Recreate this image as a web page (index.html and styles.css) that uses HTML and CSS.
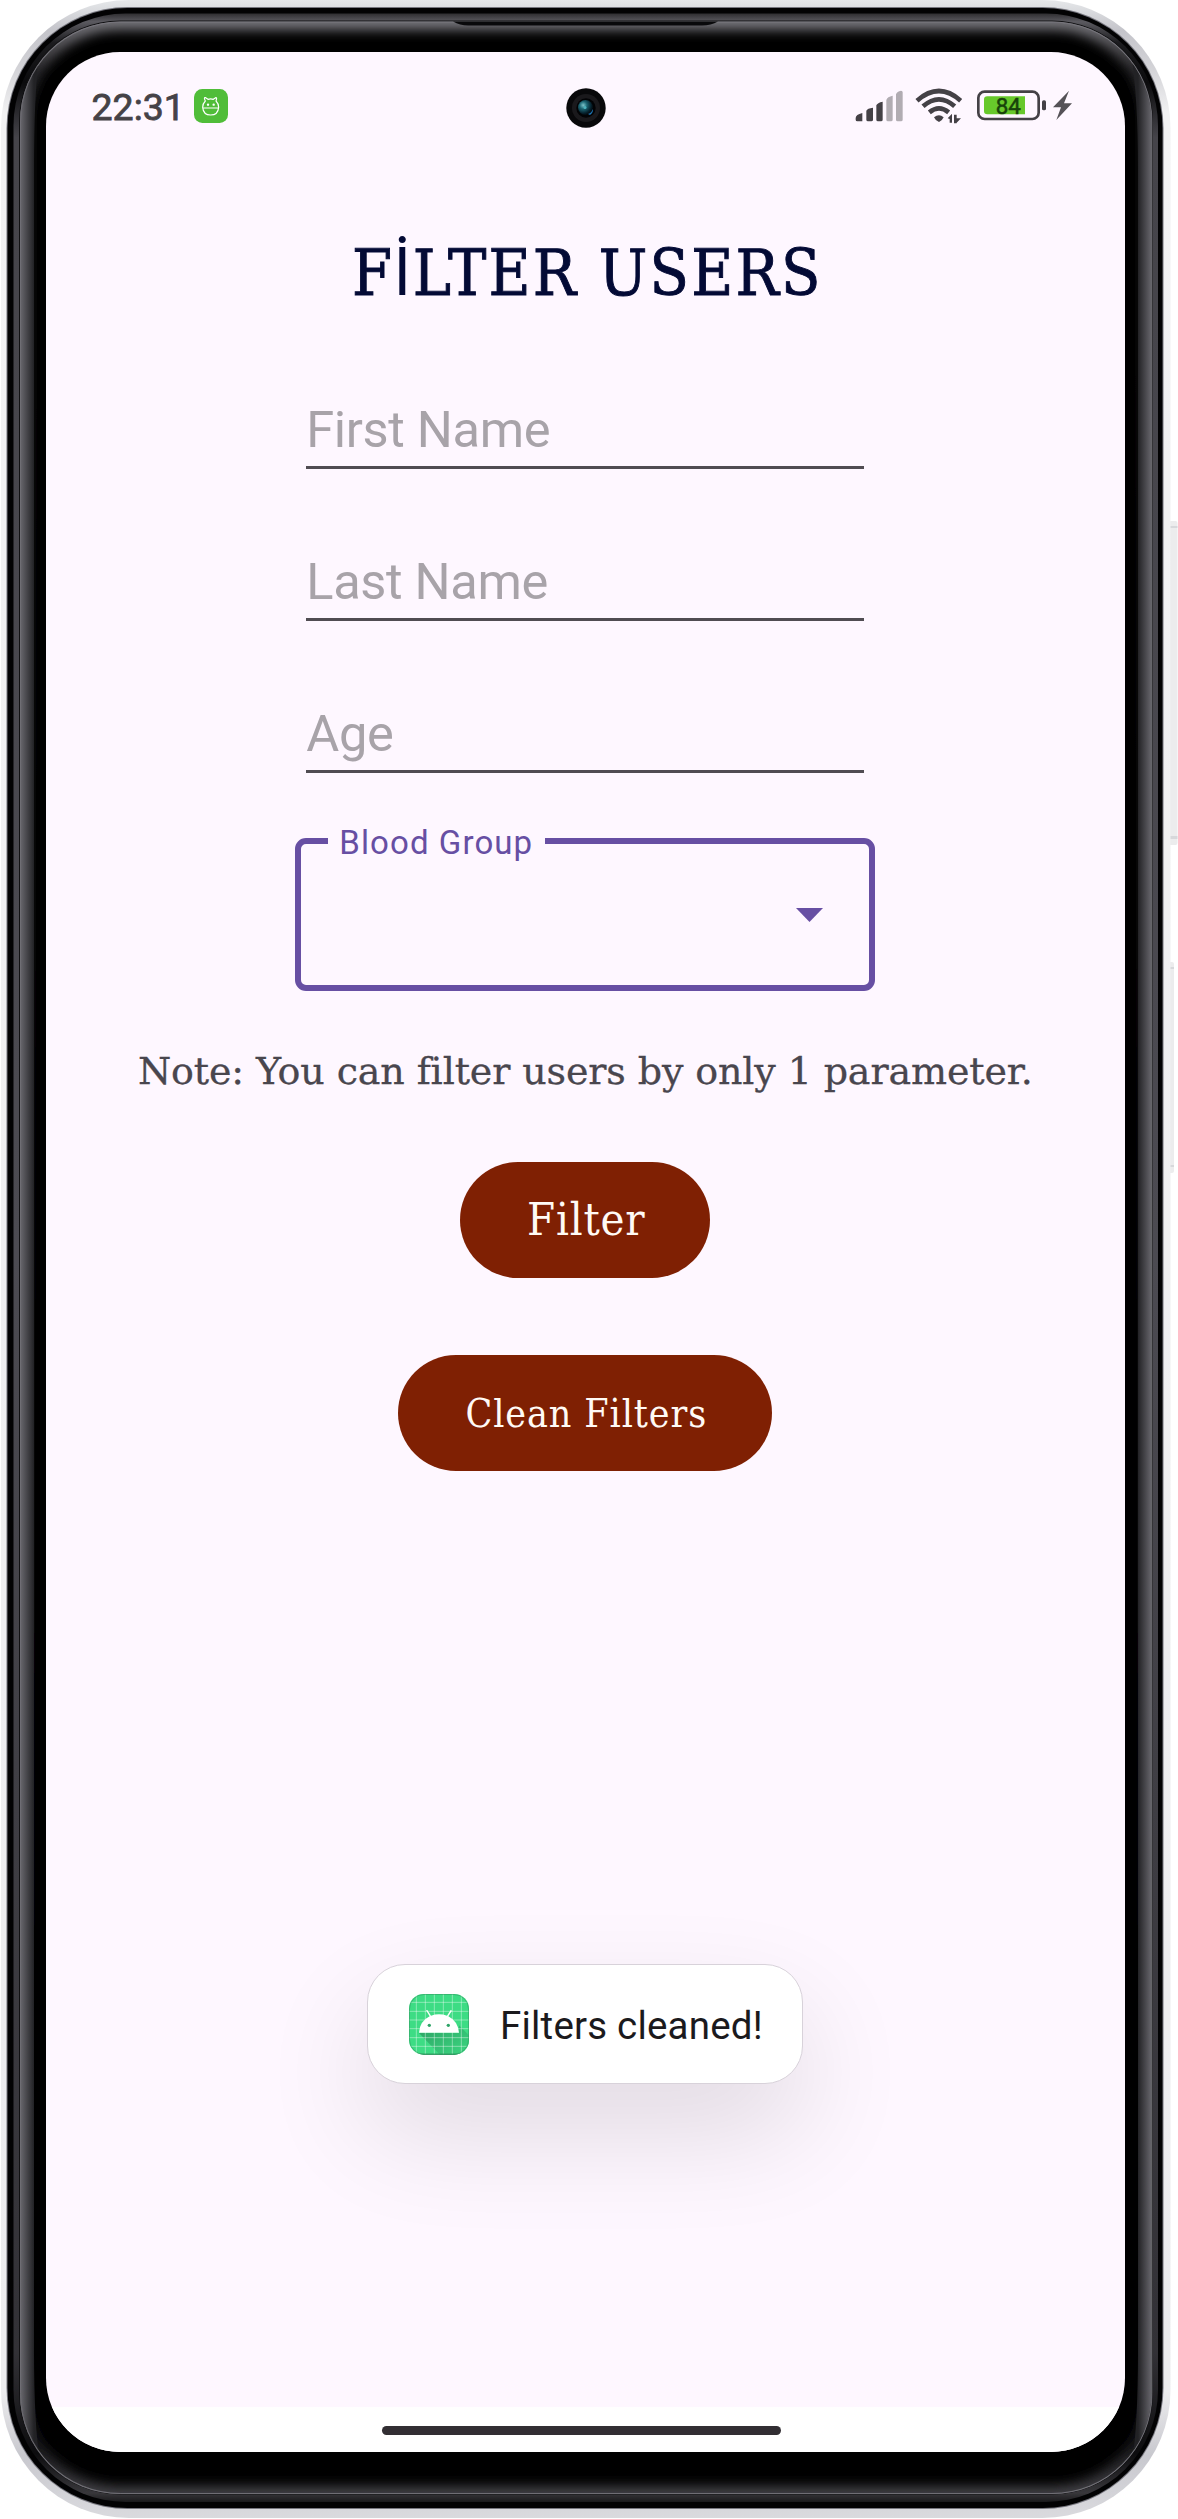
FILE: index.html
```html
<!DOCTYPE html>
<html lang="en">
<head>
<meta charset="utf-8">
<title>Filter Users</title>
<link rel="stylesheet" href="styles.css">
</head>
<body>
<div class="phone">
  <svg class="frame" width="1178" height="2519" viewBox="0 0 1178 2519" aria-hidden="true">
    <defs>
      <linearGradient id="metal" x1="0" y1="0" x2="0" y2="1">
        <stop offset="0" stop-color="#e6e8ea"/><stop offset=".012" stop-color="#c4c4ca"/><stop offset=".028" stop-color="#d4d4d8"/><stop offset=".045" stop-color="#f2f2f3"/>
        <stop offset=".95" stop-color="#ececee"/><stop offset=".975" stop-color="#c8c8ce"/><stop offset="1" stop-color="#dadade"/>
      </linearGradient>
      <linearGradient id="ring" x1="0" y1="13" x2="0" y2="2503" gradientUnits="userSpaceOnUse">
        <stop offset="0" stop-color="#2c2b2e"/><stop offset=".0035" stop-color="#5b5a60"/><stop offset=".012" stop-color="#1b1b1e"/><stop offset=".028" stop-color="#0b0b0d"/><stop offset=".05" stop-color="#45444a"/>
        <stop offset=".5" stop-color="#4c4b52"/><stop offset=".94" stop-color="#323136"/><stop offset=".98" stop-color="#0c0c0e"/><stop offset=".996" stop-color="#38373b"/><stop offset="1" stop-color="#161618"/>
      </linearGradient>
      <linearGradient id="leftGloss" x1="20" x2="34" y1="0" y2="0" gradientUnits="userSpaceOnUse"><stop offset="0" stop-color="#6a696f"/><stop offset="1" stop-color="#222225"/></linearGradient>
      <linearGradient id="rightGloss" x1="1138" x2="1152" y1="0" y2="0" gradientUnits="userSpaceOnUse"><stop offset="0" stop-color="#222225"/><stop offset="1" stop-color="#6a696f"/></linearGradient>
      <linearGradient id="edgeGloss" x1="0" x2="0" y1="20" y2="2495" gradientUnits="userSpaceOnUse">
        <stop offset="0" stop-color="#7c7b81"/><stop offset=".02" stop-color="#2c2b2e"/><stop offset=".98" stop-color="#19191b"/><stop offset="1" stop-color="#454449"/>
      </linearGradient>
      <filter id="soften" x="0" y="0" width="1178" height="2519" filterUnits="userSpaceOnUse"><feGaussianBlur stdDeviation="6"/></filter>
      <clipPath id="glass"><rect x="20.5" y="22" width="1131" height="2471.5" rx="100"/></clipPath>
      <radialGradient id="lens" cx=".35" cy=".35" r=".7"><stop offset="0" stop-color="#7cc4cb"/><stop offset=".35" stop-color="#1c6674"/><stop offset=".75" stop-color="#06222e"/><stop offset="1" stop-color="#020508"/></radialGradient>
    </defs>
    <g fill="#ececed">
      <rect x="1166" y="521" width="11.5" height="324" rx="2"/><rect x="1166" y="962" width="8" height="211" rx="2"/>
    </g>
    <g fill="#d7d8db"><path d="M1170 526h7.5v2h-7.5zM1170 836h7.5v3h-7.5zM1170 967h4v2h-4zM1170 1165h4v2h-4z"/></g>
    <rect x="1" y="0" width="1169.5" height="2518" rx="128" fill="url(#metal)"/>
    <rect x="6.5" y="7" width="1157" height="2502" rx="121" fill="#77777f"/>
    <rect x="7.5" y="8" width="1155" height="2500" rx="120" fill="#020203"/>
    <rect x="13.5" y="13.5" width="1144.5" height="2488.5" rx="112" fill="url(#ring)"/>
    <rect x="19" y="20.5" width="1134" height="2474" rx="101" fill="#111113"/>
    <rect x="20" y="21.5" width="1132" height="2472.5" rx="100" fill="#77767c"/>
    <rect x="21" y="22.5" width="1130" height="2470.5" rx="99.5" fill="#000"/>
    <g clip-path="url(#glass)">
      <rect x="20" y="21" width="1132" height="2474" rx="100" fill="none" stroke="url(#edgeGloss)" stroke-width="18" filter="url(#soften)"/>
      <path d="M20 80L39 54Q34 95 34 170V2350Q34 2425 40 2463L20 2440z" fill="url(#leftGloss)"/>
      <path d="M1152 80L1131 54Q1138 95 1138 170V2350Q1138 2425 1132 2463L1152 2440z" fill="url(#rightGloss)"/>
    </g>
    <rect x="20.5" y="22" width="1131.5" height="2471.5" rx="100" fill="none" stroke="#77767c" stroke-width=".7"/>
    <path d="M453 21.5H718Q711 25.5 702 25.5H468Q460 25.5 453 21.5z" fill="#09090b"/>
  </svg>

  <main class="screen">
    <header class="status">
      <span class="time">22:31</span>
      <svg class="app-badge" width="34" height="34" viewBox="0 0 102 102" aria-hidden="true">
        <rect width="102" height="102" rx="25" fill="#50bd39"/>
        <g fill="none" stroke="#fff" stroke-width="3.5" stroke-linecap="round" stroke-linejoin="round">
          <path d="M34 36Q28 24 35 26L42 31Q50 28 58 31L65 26Q70 25 66 36Q74 44 74 55Q72 78 50 78Q28 78 26 55Q26 44 34 36zM27 57H73"/>
        </g>
        <circle cx="42" cy="47" r="3.5" fill="#fff"/><circle cx="59" cy="47" r="3.5" fill="#fff"/>
      </svg>
      <svg class="system-icons" width="222" height="40" viewBox="69 80 666 120" aria-hidden="true">
        <g fill="#444146">
          <path d="M77 176Q77 166 97 161V186H82Q77 186 77 181zM109 154Q112 147 129 145V181Q129 186 124 186H114Q109 186 109 181zM139 138Q142 130 158 127V181Q158 186 153 186H144Q139 186 139 181z"/>
          <path fill="#b1acb2" d="M169 122Q172 112 188 109V181Q188 186 183 186H174Q169 186 169 181zM198 105Q201 96 213 94Q218 94 218 99V181Q218 186 213 186H203Q198 186 198 181z"/>
          <path d="M312 174Q327 162 341 174Q337 184 327 188Q316 184 312 174z"/>
        </g>
        <g fill="none" stroke="#444146" stroke-width="14">
          <path d="M261 124Q327 66 392 124M279 141Q327 99 374 141M298 159Q327 135 356 159"/>
        </g>
        <path d="M353 177L366 163V190H359V179zM372 192V166H380V177H393L380 190V192z" fill="#444146"/>
        <rect x="445" y="97" width="181" height="82" rx="19" fill="none" stroke="#444146" stroke-width="8"/>
        <path d="M472 111H585V165H472Q462 165 462 155V121Q462 111 472 111z" fill="#67c82b"/>
        <rect x="636" y="123" width="12" height="30" rx="5" fill="#444146"/>
        <text class="battery-level" x="535" y="164" text-anchor="middle">84</text>
        <path d="M717 94L669 144H693L679 182L726 132H702z" fill="#555257"/>
      </svg>
    </header>

    <h1 class="title">F<span class="dotted-i">İ</span>LTER USERS</h1>

    <form class="filters">
      <div class="field">First Name</div>
      <div class="field">Last Name</div>
      <div class="field">Age</div>
      <div class="dropdown">
        <span class="dropdown-label">Blood Group</span>
        <svg class="caret" width="27" height="14" viewBox="0 0 27 14" aria-hidden="true"><path d="M0 0H27L13.5 14z" fill="#674fa3"/></svg>
      </div>
    </form>

    <p class="note">Note: You can filter users by only 1 parameter.</p>
    <div class="button button-filter">Filter</div>
    <div class="button button-clean">Clean Filters</div>

    <div class="toast">
      <svg width="60" height="61" viewBox="0 0 180 183" aria-hidden="true">
        <defs>
          <clipPath id="tile"><rect width="180" height="182" rx="44"/></clipPath>
          <linearGradient id="cast" x1="0" y1="0" x2="1" y2="1"><stop offset="0" stop-color="#2ca163"/><stop offset="1" stop-color="#3ddc84"/></linearGradient>
        </defs>
        <g clip-path="url(#tile)">
          <rect width="180" height="183" fill="#3ddc84"/>
          <path d="M30 117H150V94L190 134V190H100z" fill="url(#cast)"/>
          <path d="M22 0V183M49 0V183M76 0V183M103 0V183M130 0V183M157 0V183M0 25H180M0 52H180M0 78H180M0 104H180M0 131H180M0 157H180" stroke="#fff" stroke-opacity=".4" stroke-width="3"/>
          <path d="M0 181H180" stroke="#2e8b58" stroke-width="4"/>
        </g>
        <rect x="1.5" y="1.5" width="177" height="179" rx="43" fill="none" stroke="#319b62" stroke-opacity=".55" stroke-width="3"/>
        <path d="M30 116Q32 82 62 67L51 49L55 48L66 65Q90 57 114 65L125 48L129 50L118 67Q147 82 150 116z" fill="#fff"/>
        <circle cx="61" cy="94" r="5" fill="#2ea467"/><circle cx="118" cy="94" r="5" fill="#2ea467"/>
      </svg>
      <span class="toast-text">Filters cleaned!</span>
    </div>

    <footer class="nav"><span class="nav-pill"></span></footer>
  </main>

  <svg class="camera" width="40" height="40" viewBox="0 0 40 40" aria-hidden="true">
    <circle cx="20" cy="20" r="19.7" fill="#08080a"/><circle cx="20" cy="20" r="14" fill="#1a191c"/><circle cx="20" cy="20" r="9.7" fill="#020305"/>
    <circle cx="19.5" cy="19.5" r="7.5" fill="url(#lens)"/>
    <path d="M22 26Q26 25 26.5 21Q28 24 24 27z" fill="#1d75b5"/><circle cx="19" cy="19.5" r="1.5" fill="#4db2bd"/>
  </svg>
</div>
</body>
</html>
```

FILE: styles.css
```css
* { box-sizing: border-box; }

body {
  margin: 0;
  background: #fff;
  font-family: Roboto, sans-serif;
}

.phone {
  position: relative;
  width: 1178px;
  height: 2519px;
  padding: 52px 53.5px 67.5px 46px;
  overflow: hidden;
}

.frame {
  position: absolute;
  inset: 0;
}

.camera {
  position: absolute;
  left: 565.5px;
  top: 87.5px;
}

.screen {
  position: relative;
  display: flex;
  flex-direction: column;
  align-items: center;
  height: 100%;
  border-radius: 74px;
  background: #fef7ff;
  overflow: hidden;
}

.status {
  display: flex;
  align-items: center;
  align-self: stretch;
  height: 108px;
  padding: 0 50px 0 45.5px;
}

.time {
  width: 102.5px;
  padding-top: 1px;
  font-size: 37.5px;
  line-height: 40px;
  color: #454247;
  -webkit-text-stroke: .8px #454247;
}

.system-icons { margin-left: auto; }

.battery-level {
  font-size: 67px;
  font-weight: 400;
  fill: #17420a;
  stroke: #17420a;
  stroke-width: 1.5px;
}

.title {
  margin: 68.5px 0 0;
  padding-left: 4px;
  font-family: "DejaVu Serif Condensed", "DejaVu Serif", serif;
  font-stretch: condensed;
  font-size: 64px;
  font-weight: 400;
  line-height: 88px;
  letter-spacing: 2.2px;
  color: #030a35;
  -webkit-text-stroke: .9px #030a35;
  white-space: nowrap;
}

.dotted-i {
  font-family: Roboto, sans-serif;
  font-size: 66px;
  line-height: 1px;
  -webkit-text-stroke: 0;
}

.filters {
  display: flex;
  flex-direction: column;
  align-items: center;
}

.field {
  display: flex;
  align-items: flex-end;
  width: 558px;
  height: 152px;
  border-bottom: 3px solid #504c52;
  font-size: 50.6px;
  line-height: 72px;
  letter-spacing: -.35px;
  color: #a8a3a9;
}

.dropdown {
  position: relative;
  display: flex;
  align-items: center;
  justify-content: flex-end;
  width: 580px;
  height: 153px;
  margin-top: 65px;
  padding-right: 46px;
  border: 6px solid #674fa3;
  border-radius: 11px;
}

.caret { margin-top: 2px; }

.dropdown-label {
  position: absolute;
  left: 27px;
  top: -20px;
  width: 217px;
  padding-left: 11px;
  background: #fef7ff;
  font-size: 33px;
  line-height: 38px;
  letter-spacing: 1.1px;
  color: #674fa3;
  white-space: nowrap;
}

.note {
  margin: 50px 0 61px;
  font-family: "DejaVu Serif", serif;
  font-size: 38px;
  line-height: 60px;
  letter-spacing: -.12px;
  color: #49464e;
  -webkit-text-stroke: .3px #49464e;
  white-space: nowrap;
}

.button {
  display: flex;
  align-items: center;
  justify-content: center;
  height: 116px;
  padding-left: 2px;
  border-radius: 58px;
  background: #7f2003;
  color: #fffaf5;
  font-family: "DejaVu Serif Condensed", "DejaVu Serif", serif;
  font-stretch: condensed;
  white-space: nowrap;
}

.button-filter {
  width: 250px;
  font-size: 45px;
  letter-spacing: .8px;
}

.button-clean {
  width: 374px;
  margin-top: 77px;
  padding-top: 1px;
  font-size: 39px;
  letter-spacing: .9px;
}

.toast {
  position: absolute;
  left: 320.5px;
  top: 1912px;
  display: flex;
  align-items: center;
  gap: 31px;
  width: 436px;
  height: 120px;
  padding-left: 41.5px;
  border: 1px solid #d8d2da;
  border-radius: 38px;
  background: #fff;
  box-shadow: 0 48px 110px rgba(0, 0, 0, .12);
  font-size: 38.5px;
  letter-spacing: .2px;
  color: #1b1a1d;
  white-space: nowrap;
}

.toast-text { padding-top: 2px; }

.nav {
  display: flex;
  align-items: center;
  justify-content: center;
  align-self: stretch;
  height: 44.5px;
  margin-top: auto;
  padding: 3px 7px 0 0;
  background: #fff;
}

.nav-pill {
  width: 399px;
  height: 9px;
  border-radius: 5px;
  background: #322e33;
}
```
